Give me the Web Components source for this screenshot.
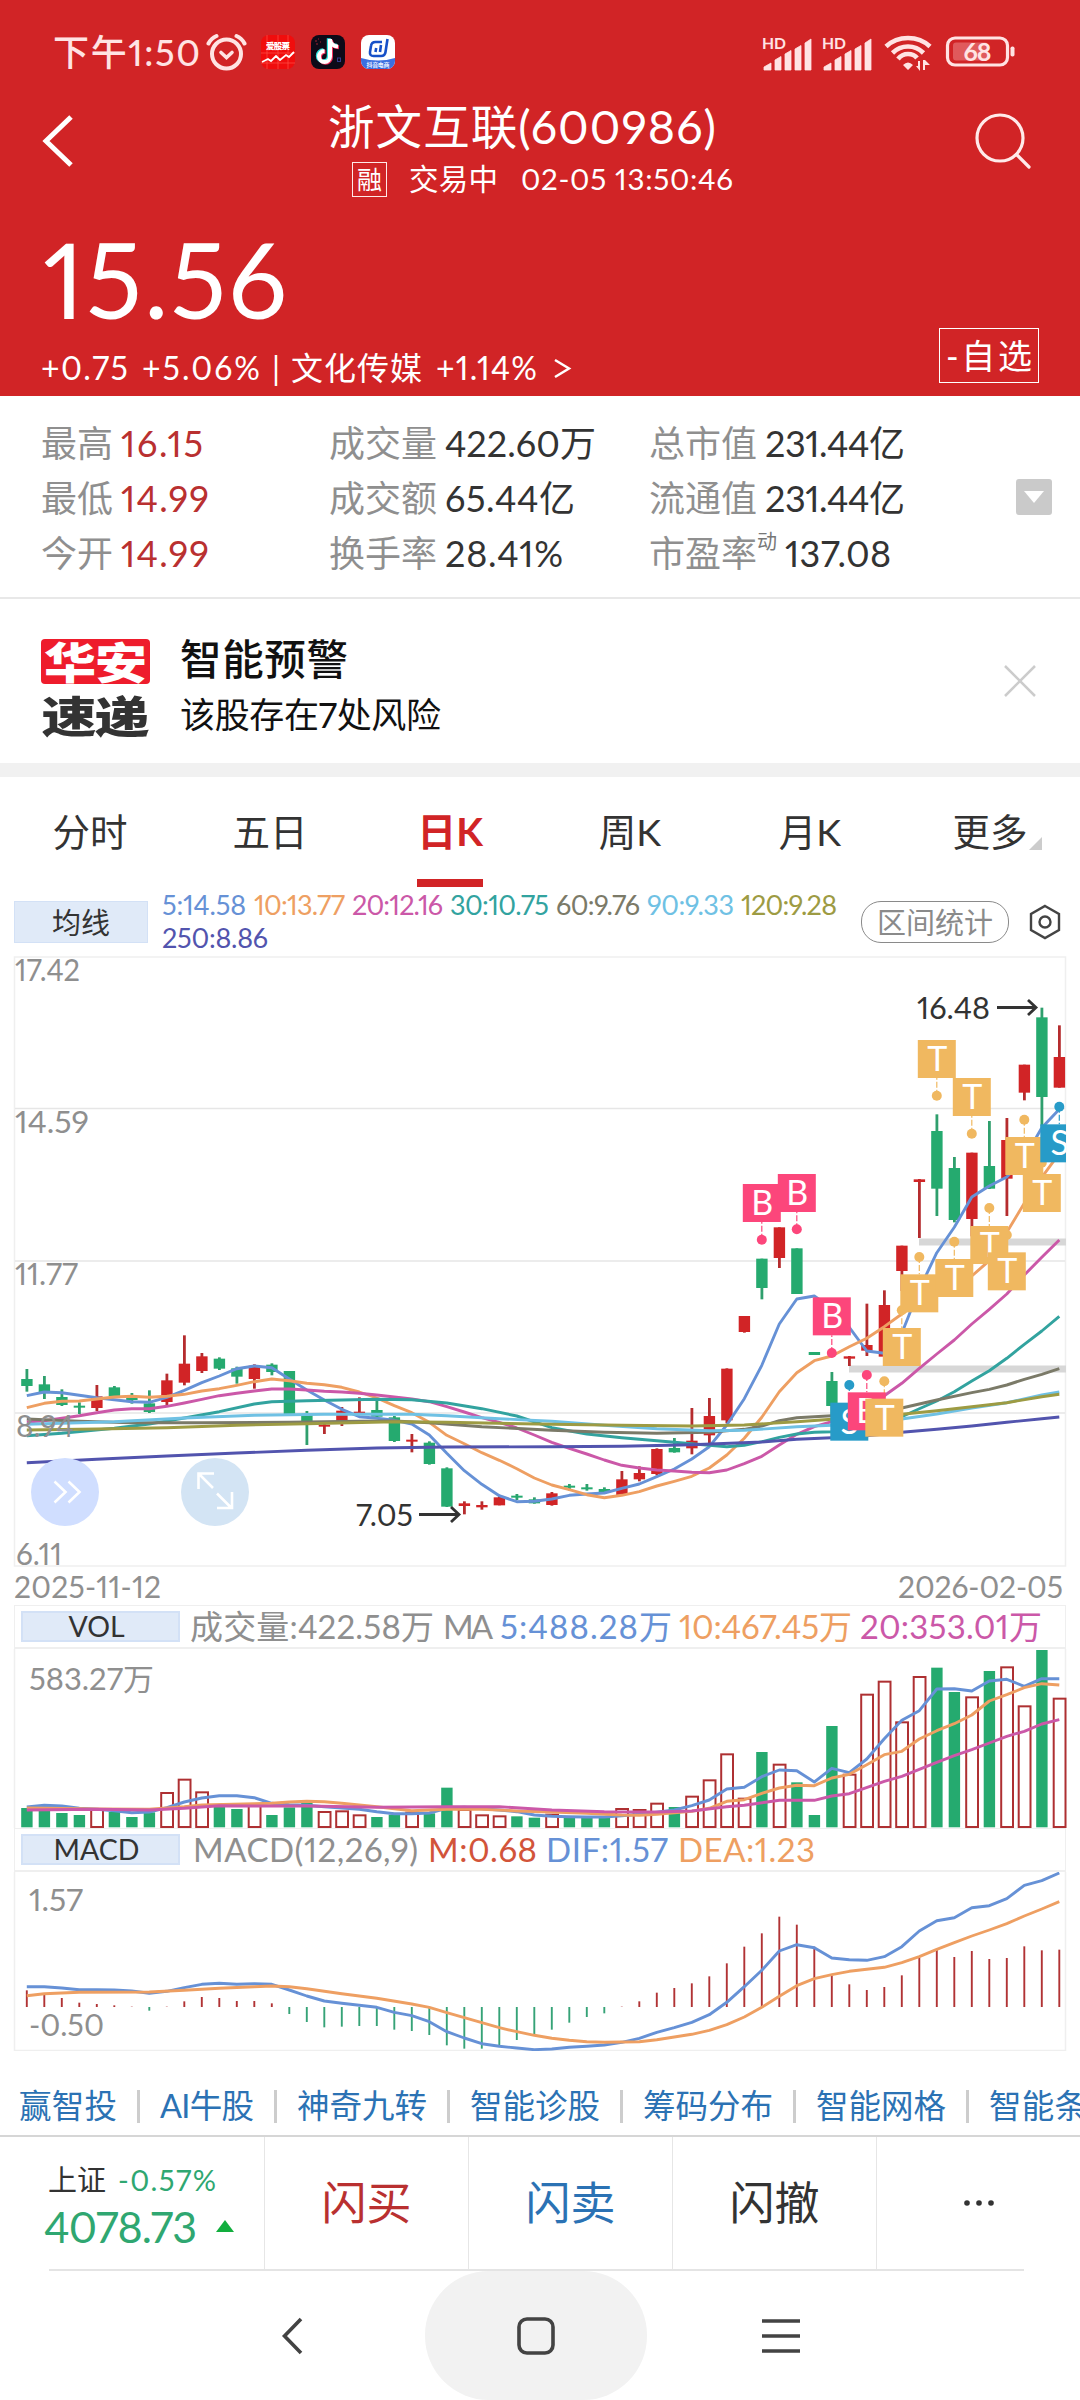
<!DOCTYPE html>
<html lang="zh-CN">
<head>
<meta charset="utf-8">
<title>浙文互联(600986)</title>
<style>
  body {
    margin: 0;
    width: 1080px;
    height: 2400px;
    overflow: hidden;
    background: #fff;
    color: #333;
    font-family: Lato, "Noto Sans CJK SC", sans-serif;
    font-variant-numeric: proportional-nums;
    line-height: 1;
  }
</style>
</head>
<body>
<stock-page></stock-page>

<script>
const RED = '#d12426';
const GREEN = '#25aa6f';
const BLUE = '#6691d6';
const ORANGE = '#ee9f62';
const PINK = '#cb58a8';

class BaseElement extends HTMLElement {
  constructor() {
    super();
    this.attachShadow({ mode: 'open' });
  }

  connectedCallback() {
    this.shadowRoot.innerHTML = `<style>
      * { box-sizing: border-box; }
      :host { display: block; box-sizing: border-box; }
      ${this.styles()}
    </style>${this.render()}`;
  }

  styles() {
    return '';
  }

  render() {
    return '<slot></slot>';
  }
}

// Text that spreads its letters over a given width
class FitText extends HTMLElement {
  constructor() {
    super();
    this.attachShadow({ mode: 'open' });
    this.shadowRoot.innerHTML = `
      <style>
        :host { display: inline-block; white-space: nowrap; flex: none; }
        span { display: inline-block; }
      </style>
      <span><slot></slot></span>`;
  }

  connectedCallback() {
    const width = Number(this.getAttribute('w'));
    const span = this.shadowRoot.querySelector('span');
    const count = this.textContent.length;
    const spacing = (width - span.getBoundingClientRect().width) / Math.max(count - 1, 1);
    this.style.width = width + 'px';
    span.style.letterSpacing = spacing.toFixed(3) + 'px';
  }
}

class StatusBar extends BaseElement {
  styles() {
    return `
      :host { height: 104px; padding: 0 62px 0 53px; display: flex; align-items: center; color: #ffe3e3; }
      .time { font-size: 36px; font-weight: 500; }
      svg { display: block; flex: none; }
      .alarm { margin-left: 6px; }
      .app { margin-left: 16px; }
      .app.first { margin-left: 14px; }
      .right { margin-left: auto; display: flex; align-items: center; }
    `;
  }

  signal() {
    return `
      <svg width="60" height="40" viewBox="0 0 60 40" fill="#ffe3e3">
        <text x="0" y="17" font-size="16" font-weight="700" textLength="24" lengthAdjust="spacingAndGlyphs" font-family="Lato">HD</text>
        <path d="M2 38v-3l7-4v7zM13 38V28l6-3.500v13.500zM23 38V22l6-3.500v19.500zM33 38V17l6-3.500v24.500zM43 38V11l6-4v31z" stroke="#ffe3e3" stroke-width=".8" stroke-linejoin="round"/>
      </svg>`;
  }

  render() {
    return `
      <fit-text class="time" w="147">下午1:50</fit-text>
      <svg class="alarm" width="41" height="40" viewBox="0 0 41 40" fill="none" stroke="#ffe3e3" stroke-width="4" stroke-linecap="round">
        <circle cx="20.500" cy="22" r="14.500"/>
        <path d="M15 20.500l5.500 5 5.500-5" stroke-width="3.600"/>
        <path d="M2.500 11.500Q5 6.500 10.500 4M38.500 11.500Q36 6.500 30.500 4"/>
      </svg>
      <svg class="app first" width="34" height="34" viewBox="0 0 34 34">
        <rect width="34" height="34" rx="8" fill="#f00d0d"/>
        <path d="M6 0v34M17 0v34M27 0v34M0 18h34M0 28h34" stroke="#ff5047" stroke-width=".7"/>
        <text x="5" y="14" font-size="8.500" font-weight="900" fill="#fff" textLength="24" font-family="Noto Sans CJK SC">爱股票</text>
        <path d="M1 27l6-3 3 2 5-5 4 4 6-5 3 2 5-5" fill="none" stroke="#fff" stroke-width="1.800"/>
      </svg>
      <svg class="app" width="34" height="34" viewBox="0 0 34 34">
        <rect width="34" height="34" rx="8" fill="#0d0a18"/>
        <g fill="none" stroke-width="4">
          <path d="M19 4v17.500a5.500 5.500 0 1 1-5.500-5.500M19 5q1 6 8 6.500" stroke="#2fe5e0" transform="translate(-1.200 -.8)"/>
          <path d="M19 4v17.500a5.500 5.500 0 1 1-5.500-5.500M19 5q1 6 8 6.500" stroke="#f4305c" transform="translate(1 .8)"/>
          <path d="M19 4v17.500a5.500 5.500 0 1 1-5.500-5.500M19 5q1 6 8 6.500" stroke="#fff"/>
        </g>
        <path d="M4 6h2M7 4h1M5 9h2M9 7h1" stroke="#a02234"/>
        <rect x="26.500" y="23" width="3" height="3.500" fill="none" stroke="#333c8c"/>
      </svg>
      <svg class="app" width="34" height="34" viewBox="0 0 34 34">
        <defs><clipPath id="r"><rect width="34" height="34" rx="8"/></clipPath></defs>
        <g clip-path="url(#r)">
          <rect width="34" height="34" fill="#fff"/>
          <path d="M0 23q17 5 34 0v11H0z" fill="#3b6fe0"/>
        </g>
        <path d="M21 7h-6.500q-4 0-4.500 4l-1 6q-.5 4 3.500 4h7.500q4 0 4.500-4L26.500 4M14.500 17l.7-4M19 17l1-7" fill="none" stroke="#1650c8" stroke-width="2.600"/>
        <text x="5.500" y="32" font-size="6" font-weight="700" fill="#e8f0ff" textLength="23" font-family="Noto Sans CJK SC">抖音电商</text>
      </svg>
      <div class="right">
        ${this.signal()}${this.signal()}
        <svg width="63" height="40" viewBox="0 0 63 40">
          <g fill="none" stroke="#ffe3e3" stroke-width="4.600">
            <path d="M4 14.500Q13 6 26 6t22 8.500"/>
            <path d="M10.500 21Q17 14.500 26 14.500T41.500 21"/>
            <path d="M16 27Q20 22 26 22t9 4"/>
          </g>
          <path d="M21 33q5-5 10 0l-5 5zM36 29v5h-2l4 5V29zM43 38v-5h5l-5-5h-2v10z" fill="#ffe3e3"/>
        </svg>
        <svg width="73" height="34" viewBox="0 0 73 34">
          <rect x="2.500" y="3" width="60" height="27" rx="7.500" fill="none" stroke="#ffe3e3" stroke-width="3.200"/>
          <rect x="8" y="7.500" width="35" height="18" rx="3" fill="#e05a5c"/>
          <rect x="65.500" y="11.500" width="4" height="10" rx="1.800" fill="#ffe3e3"/>
          <text x="18.500" y="25.500" font-size="25" font-weight="700" fill="#ffe3e3" textLength="28" font-family="Lato">68</text>
        </svg>
      </div>
    `;
  }
}

class StockHeader extends BaseElement {
  styles() {
    return `
      :host { height: 396px; background: ${RED}; color: #fff; }
      .bar { display: grid; grid-template-columns: 328px 1fr 110px; height: 106px; }
      svg { display: block; }
      .back { margin: 8px 0 0 40px; }
      .search { margin: 7px 0 0 0; }
      .title { font-size: 46.500px; height: 45px; display: flex; align-items: center; }
      .sub { height: 60px; display: flex; align-items: center; font-size: 29.500px; padding-left: 24px; }
      .tag { width: 35px; height: 35px; border: 1.500px solid #ffe9e9; font-size: 25px; display: grid; place-items: center; margin-right: 22px; }
      .quote { display: flex; justify-content: space-between; height: 186px; padding: 0 41px 13px 41px; }
      .price { font-size: 104px; height: 144px; display: flex; align-items: center; padding-bottom: 6px; margin-left: 2px; }
      .change { font-size: 32px; height: 28px; display: flex; align-items: center; white-space: nowrap; }
      .optional { align-self: flex-end; width: 100px; height: 55px; border: 1.500px solid #fff; font-size: 34px; display: flex; align-items: center; justify-content: center; }
    `;
  }

  render() {
    return `
      <status-bar></status-bar>
      <div class="bar">
        <svg class="back" width="36" height="58" viewBox="0 0 36 58"><path d="M31 5L6 29l25 24" fill="none" stroke="#fff" stroke-width="5"/></svg>
        <div>
          <div class="title"><fit-text w="388">浙文互联(600986)</fit-text></div>
          <div class="sub">
            <span class="tag">融</span>
            <fit-text w="89">交易中</fit-text>
            <fit-text w="212" style="margin-left:23px">02-05 13:50:46</fit-text>
          </div>
        </div>
        <svg class="search" width="62" height="62" viewBox="0 0 62 62" fill="none" stroke="#ffeaea" stroke-width="3.200" stroke-linecap="round"><circle cx="30" cy="27" r="23"/><path d="M46.500 43.500L59 56"/></svg>
      </div>
      <div class="quote">
        <div>
          <div class="price"><fit-text w="244">15.56</fit-text></div>
          <div class="change">
            <fit-text w="87">+0.75</fit-text>
            <fit-text w="118" style="margin-left:14px">+5.06%</fit-text>
            <span style="margin:0 11px 0 12px">|</span>
            <fit-text w="131">文化传媒</fit-text>
            <fit-text w="101" style="margin-left:14px">+1.14%</fit-text>
            <svg style="margin-left:16px" width="20" height="24" viewBox="0 0 20 24"><path d="M2 4l14 8.500L2 21" fill="none" stroke="#fff" stroke-width="2.500"/></svg>
          </div>
        </div>
        <div class="optional"><fit-text w="86">-自选</fit-text></div>
      </div>
    `;
  }
}

class StatItem extends BaseElement {
  styles() {
    return `
      :host { display: flex; align-items: center; height: 55px; font-size: 36px; }
      .label { color: #8f8f8f; }
      .value { color: var(--value, #333); margin-left: 8px; }
      sup { font-size: 20px; align-self: flex-start; margin-top: 6px; color: #777; line-height: 1; }
    `;
  }

  render() {
    const note = this.getAttribute('note');
    return `
      <span class="label">${this.getAttribute('label')}</span>${note ? `<sup>${note}</sup>` : ''}
      <fit-text class="value" w="${this.getAttribute('w')}">${this.textContent}</fit-text>
    `;
  }
}

class QuoteStats extends BaseElement {
  styles() {
    return `
      :host { display: flex; justify-content: space-between; height: 203px; padding: 19px 28px 0 41px; border-bottom: 2px solid #e8e8e8; }
      .grid { display: grid; grid-template-columns: 288px 320px 320px; grid-auto-rows: 55px; }
      .up { --value: #b93030; }
      .more { width: 36px; height: 36px; margin-top: 64px; border-radius: 3px; background: #cacaca; display: grid; place-items: center; }
    `;
  }

  render() {
    return `
      <div class="grid">
        <stat-item class="up" label="最高" w="82">16.15</stat-item>
        <stat-item label="成交量" w="151">422.60万</stat-item>
        <stat-item label="总市值" w="140">231.44亿</stat-item>
        <stat-item class="up" label="最低" w="88">14.99</stat-item>
        <stat-item label="成交额" w="130">65.44亿</stat-item>
        <stat-item label="流通值" w="140">231.44亿</stat-item>
        <stat-item class="up" label="今开" w="88">14.99</stat-item>
        <stat-item label="换手率" w="118">28.41%</stat-item>
        <stat-item label="市盈率" note="动" w="106">137.08</stat-item>
      </div>
      <div class="more"><svg width="20" height="12" viewBox="0 0 20 12"><path d="M0 0h20L10 12z" fill="#fff"/></svg></div>
    `;
  }
}

class RiskAlert extends BaseElement {
  styles() {
    return `
      :host { display: flex; height: 178px; padding: 40px 43px 0 41px; border-bottom: 14px solid #f1f1f1; color: #111; }
      .logo { width: 109px; margin-right: 30px; font-weight: 900; font-size: 52px; }
      .logo div { height: 45px; display: flex; align-items: center; justify-content: center; }
      .logo .top { background: #ee1c2c; color: #fff; border-radius: 4px; }
      .logo .bottom { color: #333; margin-top: 11px; font-size: 55px; }
      .logo fit-text { transform: scaleY(.84); }
      .logo .bottom fit-text { transform: scaleY(.78); }
      .title { height: 42px; font-size: 41.500px; font-weight: 500; display: flex; align-items: center; }
      .text { height: 66px; font-size: 35px; display: flex; align-items: center; }
      .close { margin: 25px 0 0 auto; }
    `;
  }

  render() {
    return `
      <div class="logo">
        <div class="top"><fit-text w="103">华安</fit-text></div>
        <div class="bottom"><fit-text w="108">速递</fit-text></div>
      </div>
      <div>
        <div class="title"><fit-text w="168">智能预警</fit-text></div>
        <div class="text"><fit-text w="261">该股存在7处风险</fit-text></div>
      </div>
      <svg class="close" width="34" height="34" viewBox="0 0 34 34"><path d="M2 2l30 30M32 2L2 32" stroke="#ccc" stroke-width="2.500"/></svg>
    `;
  }
}

class PeriodTabs extends BaseElement {
  styles() {
    return `
      :host { display: grid; grid-template-columns: repeat(6, 180px); height: 110px; font-size: 37.500px; }
      div { position: relative; display: flex; align-items: center; justify-content: center; padding-bottom: 1px; }
      .active { color: ${RED}; font-weight: 700; font-size: 39px; }
      .active::after { content: ""; position: absolute; left: 57px; bottom: 0; width: 66px; height: 8px; background: ${RED}; }
      svg { position: absolute; right: 38px; bottom: 37px; }
    `;
  }

  render() {
    return `
      <div>分时</div><div>五日</div><div class="active">日K</div><div>周K</div><div>月K</div>
      <div>更多<svg width="13" height="13"><path d="M13 0v13H0z" fill="#ccc"/></svg></div>
    `;
  }
}

class MaLegend extends BaseElement {
  styles() {
    return `
      :host { display: flex; height: 69px; padding-left: 14px; }
      :host > * { flex: none; }
      .name { width: 134px; height: 42px; margin-top: 14px; background: #e0eaf8; border: 1px solid #d3e1f6; font-size: 29px; display: grid; place-items: center; }
      .list { width: 690px; margin: 1px 0 0 14px; font-size: 27px; line-height: 33px; display: flex; flex-wrap: wrap; height: 66px; }
      .range { width: 148px; height: 42px; margin: 14px 0 0 9px; border: 1.500px solid #8a8a8a; border-radius: 20px; color: #8a8a8a; font-size: 29px; display: grid; place-items: center; }
      .gear { margin: 17px 0 0 20px; }
    `;
  }

  render() {
    const items = [
      ['5:14.58', BLUE, 84, 8],
      ['10:13.77', ORANGE, 91, 7],
      ['20:12.16', PINK, 91, 7],
      ['30:10.75', '#32a39f', 99, 7],
      ['60:9.76', '#7b7a68', 84, 7],
      ['90:9.33', '#6fc1e4', 87, 7],
      ['120:9.28', '#9d9b43', 96, 4],
      ['250:8.86', '#5254ae', 106, 0]
    ];
    return `
      <div class="name">均线</div>
      <div class="list">${items.map(([text, color, w, gap]) =>
        `<fit-text w="${w}" style="color:${color};margin-right:${gap}px">${text}</fit-text>`).join('')}</div>
      <div class="range">区间统计</div>
      <svg class="gear" width="32" height="36" viewBox="0 0 32 36" fill="none" stroke="#444" stroke-width="2.400"><path d="M16 2l14 8v16l-14 8-14-8V10z"/><circle cx="16" cy="18" r="5.500"/></svg>
    `;
  }
}

// Shared drawing for the charts. Heights in the data are in thirds of a pixel.
class ChartElement extends BaseElement {
  x(i) {
    return 26.8 + i * 17.5;
  }

  line(points, color, offset = 0, width = 2.9) {
    const path = points.map(([i, v]) => `${this.x(i).toFixed(1)},${((v + offset) / 3).toFixed(1)}`).join(' ');
    return `<polyline points="${path}" fill="none" stroke="${color}" stroke-width="${width}" stroke-linejoin="round"/>`;
  }

  label(text, x, y, width, color = '#8f8f8f') {
    return `<text x="${x}" y="${y}" font-size="30" fill="${color}" textLength="${width}" lengthAdjust="spacingAndGlyphs">${text}</text>`;
  }
}

// color, high, top, bottom, low
const CANDLES = [
  ['g', 1239, 1269, 1290, 1307], ['g', 1260, 1285, 1310, 1329], ['g', 1300, 1323, 1347, 1350],
  ['g', 1339, 1349, 1354, 1374], ['r', 1287, 1321, 1356, 1365], ['g', 1290, 1294, 1320, 1322],
  ['g', 1311, 1324, 1332, 1343], ['g', 1303, 1342, 1368, 1371], ['r', 1253, 1273, 1338, 1349],
  ['r', 1138, 1223, 1280, 1288], ['r', 1191, 1201, 1245, 1251], ['g', 1204, 1208, 1238, 1242],
  ['g', 1232, 1237, 1262, 1283], ['r', 1225, 1229, 1269, 1298], ['g', 1222, 1226, 1248, 1258],
  ['g', 1245, 1245, 1374, 1374], ['g', 1365, 1377, 1398, 1467], ['r', 1402, 1406, 1412, 1434],
  ['r', 1353, 1364, 1396, 1410], ['r', 1324, 1367, 1371, 1371], ['g', 1335, 1362, 1382, 1384],
  ['g', 1380, 1384, 1455, 1458], ['r', 1434, 1451, 1456, 1489], ['g', 1456, 1460, 1524, 1526],
  ['g', 1534, 1537, 1652, 1653], ['r', 1636, 1642, 1650, 1675], ['r', 1636, 1647, 1654, 1661],
  ['r', 1617, 1624, 1648, 1648], ['g', 1614, 1619, 1623, 1632], ['g', 1624, 1630, 1642, 1643],
  ['r', 1608, 1612, 1647, 1649], ['g', 1584, 1589, 1594, 1604], ['g', 1584, 1594, 1599, 1604],
  ['g', 1594, 1599, 1609, 1612], ['r', 1545, 1570, 1617, 1617], ['r', 1531, 1551, 1570, 1576],
  ['r', 1477, 1479, 1554, 1558], ['g', 1446, 1476, 1489, 1490], ['r', 1356, 1454, 1477, 1495],
  ['r', 1326, 1380, 1438, 1464], ['r', 1237, 1238, 1393, 1402], ['r', 1080, 1080, 1128, 1130],
  ['g', 908, 908, 996, 1030], ['r', 814, 814, 906, 936], ['g', 877, 877, 1014, 1014],
  ['g', 1188, 1188, 1197, 1197], ['g', 1248, 1275, 1350, 1382], ['r', 1200, 1201, 1208, 1230],
  ['r', 1043, 1167, 1184, 1200], ['r', 1003, 1047, 1202, 1218], ['r', 869, 869, 945, 1005],
  ['r', 669, 670, 678, 846], ['g', 475, 525, 698, 780], ['g', 603, 636, 792, 799],
  ['r', 590, 590, 789, 841], ['g', 495, 630, 698, 699], ['r', 486, 552, 668, 780],
  ['r', 326, 326, 410, 433], ['g', 155, 184, 423, 512], ['r', 208, 303, 395, 395]
];

const seq = values => values.map((v, i) => [i, v]);

const PRICE_LINES = [
  [BLUE, seq([1319, 1308, 1310, 1318, 1325, 1331, 1337, 1339, 1324, 1303, 1280, 1260, 1238, 1230, 1235, 1269, 1302, 1332, 1360, 1382,
    1387, 1393, 1404, 1437, 1492, 1544, 1585, 1619, 1637, 1636, 1629, 1618, 1614, 1611, 1597, 1584, 1562, 1539, 1509, 1472,
    1407, 1328, 1228, 1104, 1029, 1020, 1057, 1114, 1185, 1192, 1132, 1000, 890, 814, 723, 690, 663, 607, 515, 460])],
  [ORANGE, seq([1355, 1342, 1336, 1335, 1329, 1323, 1321, 1324, 1321, 1315, 1305, 1298, 1288, 1277, 1269, 1274, 1282, 1286, 1294, 1308,
    1326, 1349, 1370, 1399, 1438, 1463, 1490, 1513, 1538, 1566, 1587, 1601, 1616, 1625, 1618, 1607, 1590, 1576, 1561, 1536,
    1497, 1447, 1384, 1307, 1250, 1214, 1200, 1172, 1147, 1112, 1074, 1037, 1002, 982, 960, 914, 829, 742, 664, 592])],
  [PINK, seq([1398, 1394, 1387, 1379, 1370, 1362, 1358, 1358, 1351, 1341, 1330, 1319, 1312, 1305, 1299, 1299, 1302, 1306, 1308, 1312,
    1317, 1323, 1329, 1337, 1352, 1368, 1385, 1399, 1416, 1437, 1459, 1477, 1494, 1512, 1528, 1536, 1542, 1545, 1549, 1550,
    1542, 1523, 1501, 1467, 1435, 1412, 1397, 1382, 1357, 1319, 1282, 1237, 1194, 1152, 1104, 1060, 1014, 957, 904, 852])],
  ['#32a39f', [[0, 1439], [2, 1432], [5, 1417], [7, 1404], [9, 1386], [11, 1367], [13, 1344], [14, 1337], [16, 1334], [20, 1330], [22, 1331],
    [24, 1341], [26, 1358], [28, 1380], [30, 1415], [32, 1434], [34, 1445], [35, 1450], [37, 1459], [39, 1468], [40, 1472], [41, 1468],
    [42, 1457], [43, 1444], [44, 1434], [45, 1429], [46, 1427], [48, 1417], [49, 1407], [50, 1382], [51, 1358], [52, 1335], [53, 1307],
    [54, 1275], [55, 1244], [56, 1207], [57, 1165], [58, 1125], [59, 1081]]],
  ['#7b7a68', [[0, 1389], [3, 1396], [6, 1400], [10, 1400], [15, 1399], [19, 1396], [21, 1395], [23, 1400], [26, 1412], [30, 1423], [33, 1429],
    [36, 1432], [39, 1429], [41, 1420], [42, 1410], [43, 1394], [44, 1385], [46, 1379], [48, 1372], [50, 1356], [52, 1332], [54, 1310],
    [55, 1300], [56, 1287], [57, 1270], [58, 1255], [59, 1238]]],
  ['#6fc1e4', [[0, 1405], [5, 1397], [9, 1386], [13, 1378], [17, 1375], [22, 1375], [24, 1379], [27, 1388], [30, 1396], [33, 1408], [36, 1418],
    [39, 1424], [41, 1423], [44, 1412], [46, 1408], [48, 1404], [50, 1389], [52, 1374], [54, 1356], [56, 1340], [58, 1317], [59, 1308]]],
  ['#9d9b43', [[0, 1422], [4, 1419], [8, 1415], [12, 1408], [16, 1403], [21, 1397], [24, 1399], [30, 1405], [34, 1408], [38, 1410], [41, 1407],
    [44, 1397], [46, 1390], [48, 1384], [50, 1375], [52, 1364], [54, 1352], [56, 1340], [58, 1322], [59, 1315]]],
  ['#5254ae', [[0, 1520], [4, 1510], [8, 1500], [12, 1491], [16, 1483], [20, 1476], [24, 1473], [30, 1472], [34, 1471], [38, 1466], [42, 1458],
    [44, 1450], [46, 1445], [48, 1439], [50, 1429], [52, 1420], [54, 1410], [56, 1399], [58, 1388], [59, 1383]]]
];

// letter, index, top of the box, height of the dot
const MARKS = [
  ['B', 42, 684, 851], ['B', 44, 654, 820], ['B', 46, 1024, 1191],
  ['S', 47, 1340, 1287], ['B', 48, 1309, 1257], ['T', 49, 1328, 1276],
  ['T', 50, 1116, 1063], ['T', 51, 955, 903], ['T', 52, 252, 419],
  ['T', 53, 909, 857], ['T', 54, 366, 533], ['T', 55, 810, 756],
  ['T', 56, 889, 837], ['T', 57, 543, 491], ['T', 58, 654, 620],
  ['S', 59, 505, 452]
];

const MARK_COLORS = { B: '#fc467b', S: '#279bc8', T: '#f0b860' };

class KlineChart extends ChartElement {
  styles() {
    return `
      svg { display: block; overflow: visible; }
      .dates { display: flex; justify-content: space-between; align-items: center; height: 38px; padding: 0 17px 0 14px; font-size: 30px; color: #8f8f8f; }
    `;
  }

  candle([type, high, top, bottom, low], i) {
    const x = this.x(i);
    const fill = type === 'r' ? RED : GREEN;
    const wick = type === 'r' ? '#b52c2e' : '#2f9f6d';
    const height = Math.max((bottom - top) / 3, 2);
    return `<rect x="${x - 1.3}" y="${high / 3}" width="2.800" height="${(low - high) / 3}" fill="${wick}"/>
      <rect x="${x - 5.6}" y="${top / 3}" width="11.400" height="${height}" fill="${fill}"/>`;
  }

  dot([letter, i, top, dot]) {
    const x = this.x(i);
    const edge = dot > top ? top + 114 : top;
    return `<path d="M${x} ${dot / 3}V${edge / 3}" stroke="${MARK_COLORS[letter]}" stroke-width="1.200" stroke-dasharray="6 2"/>
      <circle cx="${x}" cy="${dot / 3}" r="5" fill="${MARK_COLORS[letter]}"/>`;
  }

  box([letter, i, top]) {
    const x = this.x(i);
    return `<rect x="${x - 19}" y="${top / 3}" width="38" height="38" fill="${MARK_COLORS[letter]}"/>
      <text x="${x + 0.5}" y="${top / 3 + 31}" font-size="34" fill="#fff" text-anchor="middle">${letter}</text>`;
  }

  render() {
    return `
      <svg width="1080" height="611" viewBox="0 0 1080 611">
        <defs><clipPath id="frame"><rect x="14" y="0" width="1052" height="611"/></clipPath></defs>
        <g stroke="#efefef" stroke-width="1.500" fill="none">
          <rect x="14.500" y="1" width="1051" height="609"/>
          <path d="M15 152.500H1065M15 305H1065M15 457H1065" stroke="#e6e6e6"/>
        </g>
        <path d="M919 286h147M849 413h217" stroke="#d7d7d7" stroke-width="7"/>
        <g clip-path="url(#frame)">
          ${CANDLES.map((c, i) => this.candle(c, i)).join('')}
          ${PRICE_LINES.map(([color, points]) => this.line(points, color)).join('')}
          ${MARKS.map(m => this.dot(m)).join('')}
          ${MARKS.map(m => this.box(m)).join('')}
        </g>
        ${this.label('17.42', 15, 25, 65)}
        ${this.label('14.59', 15, 177, 74)}
        ${this.label('11.77', 15, 329, 63)}
        ${this.label('8.94', 16, 481, 58)}
        ${this.label('6.11', 16, 609, 46)}
        ${this.label('16.48', 917, 63, 73, '#333')}
        ${this.label('7.05', 356, 570, 57, '#333')}
        <path d="M997 51.500h38M1028 44l8 7.500-8 7.500M419 558.500h39M451 551l8 7.500-8 7.500" fill="none" stroke="#333" stroke-width="2.800"/>
        <circle cx="65" cy="536" r="34" fill="#d0deff"/>
        <path d="M54.500 525.500l11 10.500-11 10.500M68.500 525.500l11 10.500-11 10.500" fill="none" stroke="#fff" stroke-width="2.600"/>
        <circle cx="215" cy="536" r="34" fill="#d3e4f4"/>
        <path d="M213 532l-14-14M198.500 533v-15.500H214M217 537.500l14.500 14.500M217 552h15v-16" fill="none" stroke="#fff" stroke-width="2.600"/>
      </svg>
      <div class="dates"><fit-text w="147">2025-11-12</fit-text><fit-text w="165">2026-02-05</fit-text></div>
    `;
  }
}

// Title row with the indicator name and its values, the plot goes below
class IndicatorHead extends BaseElement {
  styles() {
    return `
      :host { display: flex; align-items: center; height: 44px; margin: 0 14px; padding-left: 6px; border: 1.500px solid #efefef; border-bottom-width: 2px; font-size: 33px; white-space: nowrap; }
      .name { flex: none; width: 159px; height: 31px; background: #e0eaf8; border: 2px solid #d3e1f6; display: flex; align-items: center; justify-content: center; font-size: 28.500px; padding-right: 8px; margin-right: 10px; }
    `;
  }

  render() {
    return `<div class="name">${this.getAttribute('name')}</div><slot></slot>`;
  }
}

const VOLUMES = 'g624 g630 g639 g645 r630 g636 g651 g637 r579 r539 r577 g620 g627 r618 g645 g622 g608 r636 r634 r646 g651 g644 r638 g640 g563 r630 r646 r649 g649 g653 r644 g652 g652 g652 r627 r630 r611 g621 r590 r541 r463 r596 g456 r494 g547 g645 g378 r524 r284 r245 r367 r231 g203 g276 r292 g213 r202 r319 g150 r296'.split(' ');

class VolumeChart extends ChartElement {
  styles() {
    return 'svg { display: block; }';
  }

  bar(item, i) {
    const x = this.x(i);
    const y = (Number(item.slice(1)) - 147) / 3;
    if (item[0] === 'g') {
      return `<rect x="${x - 5.6}" y="${y}" width="11.400" height="${178.3 - y}" fill="${GREEN}"/>`;
    }
    return `<rect x="${x - 5.6}" y="${y}" width="11.800" height="${178 - y}" fill="#fff" stroke="#ae3032" stroke-width="2"/>`;
  }

  render() {
    const ma5 = seq([621, 616, 618, 625, 628, 632, 638, 636, 623, 606, 594, 587, 587, 593, 610, 614, 616, 620, 624, 628,
      635, 641, 641, 639, 625, 622, 626, 630, 635, 645, 649, 650, 651, 651, 647, 643, 637, 630, 617, 600,
      567, 562, 530, 510, 512, 546, 505, 518, 477, 416, 361, 332, 267, 266, 273, 243, 238, 259, 236, 236]);
    const ma10 = [[0, 624], [4, 627], [7, 628], [8, 624], [9, 620], [10, 615], [13, 611], [14, 610], [15, 606], [16, 604], [17, 605], [18, 610],
      [20, 620], [22, 632], [24, 628], [26, 628], [28, 633], [30, 636], [32, 640], [34, 645], [35, 646], [36, 643], [38, 634], [39, 625],
      [40, 604], [41, 599], [42, 580], [43, 564], [44, 556], [45, 557], [46, 534], [47, 523], [48, 494], [49, 464], [50, 454], [51, 417],
      [52, 392], [53, 371], [54, 345], [55, 303], [56, 284], [57, 263], [58, 251], [59, 255]];
    const ma20 = [[0, 630], [4, 628], [7, 630], [9, 625], [11, 617], [13, 618], [16, 618], [20, 622], [24, 620], [27, 620], [30, 630], [33, 635],
      [36, 636], [38, 633], [40, 620], [41, 616], [43, 601], [45, 601], [46, 588], [47, 581], [49, 544], [50, 529], [51, 508], [52, 487],
      [53, 467], [54, 449], [55, 429], [56, 409], [57, 394], [58, 372], [59, 359]];
    return `
      <svg width="1080" height="179" viewBox="0 0 1080 179">
        <path d="M14.500 0v179M1065.500 0v179" stroke="#efefef" stroke-width="1.500"/>
        ${VOLUMES.map((v, i) => this.bar(v, i)).join('')}
        ${this.line(ma5, BLUE, -147)}
        ${this.line(ma10, ORANGE, -147)}
        ${this.line(ma20, PINK, -147)}
        ${this.label('583.27万', 29, 41, 125)}
      </svg>
    `;
  }
}

class MacdChart extends ChartElement {
  styles() {
    return 'svg { display: block; }';
  }

  render() {
    const bars = [1171, 1184, 1194, 1208, 1212, 1216, 1220, 1232, 1220, 1204, 1191, 1194, 1203, 1203, 1210, 1242, 1266, 1282, 1280, 1278,
      1278, 1289, 1293, 1305, 1336, 1346, 1346, 1335, 1320, 1303, 1289, 1268, 1251, 1240, 1220, 1204, 1178, 1164, 1150, 1129,
      1090, 1040, 1000, 950, 974, 1040, 1127, 1153, 1170, 1161, 1126, 1072, 1048, 1071, 1053, 1077, 1074, 1039, 1051, 1049];
    const dif = seq([1160, 1160, 1164, 1169, 1169, 1170, 1173, 1180, 1174, 1163, 1153, 1150, 1153, 1151, 1153, 1170, 1188, 1203, 1210, 1216,
      1222, 1237, 1247, 1265, 1295, 1314, 1331, 1339, 1344, 1349, 1347, 1342, 1339, 1335, 1327, 1315, 1297, 1283, 1267, 1244,
      1207, 1160, 1111, 1053, 1034, 1043, 1074, 1079, 1081, 1070, 1040, 993, 962, 953, 923, 917, 896, 856, 842, 819]);
    const dea = [[0, 1187], [1, 1181], [3, 1177], [7, 1176], [9, 1171], [11, 1165], [13, 1160], [14, 1158], [15, 1160], [16, 1166], [18, 1181],
      [20, 1195], [22, 1212], [23, 1222], [24, 1238], [25, 1253], [26, 1268], [27, 1283], [28, 1295], [29, 1306], [30, 1315], [31, 1321],
      [32, 1325], [33, 1327], [35, 1325], [36, 1319], [38, 1303], [39, 1291], [40, 1274], [41, 1251], [42, 1222], [43, 1189], [44, 1157],
      [45, 1136], [46, 1124], [47, 1114], [49, 1102], [50, 1088], [51, 1070], [52, 1048], [53, 1028], [54, 1008], [55, 990], [56, 971],
      [57, 948], [58, 927], [59, 905]];
    const zero = (1221 - 816) / 3;
    return `
      <svg width="1080" height="179" viewBox="0 0 1080 179">
        <path d="M14.500 0v178.500H1065.500V0" fill="none" stroke="#efefef" stroke-width="1.500"/>
        ${bars.map((v, i) => `<path d="M${this.x(i)} ${zero}V${(v - 816) / 3}" stroke="${v > 1221 ? '#36a377' : '#b13335'}" stroke-width="1.900"/>`).join('')}
        ${this.line(dif, BLUE, -816)}
        ${this.line(dea, ORANGE, -816)}
        ${this.label('1.57', 29, 39, 54)}
        ${this.label('-0.50', 29, 164, 75)}
      </svg>
    `;
  }
}

class QuickLinks extends BaseElement {
  styles() {
    return `
      :host { display: flex; align-items: center; height: 86px; padding: 26px 0 0 19px; overflow: hidden; border-bottom: 2px solid #d6d6d6; font-size: 32.500px; color: #2b72b4; }
      i { flex: none; width: 3px; height: 33px; background: #cdcdcd; margin: 0 20px; }
    `;
  }

  render() {
    const links = [['赢智投', 98], ['AI牛股', 94], ['神奇九转', 130], ['智能诊股', 130], ['筹码分布', 130], ['智能网格', 130], ['智能条', 98]];
    return links.map(([text, w]) => `<fit-text w="${w}">${text}</fit-text>`).join('<i></i>');
  }
}

class TradeBar extends BaseElement {
  styles() {
    return `
      :host { display: grid; grid-template-columns: 265px repeat(4, 204px); height: 134px; position: relative; }
      :host::after { content: ""; position: absolute; left: 49px; right: 56px; bottom: 0; height: 2px; background: #e4e4e4; }
      .cell { border-right: 1.500px solid #e6e6e6; display: flex; align-items: center; justify-content: center; font-size: 45px; padding-bottom: 2px; }
      .cell:last-child { border: 0; }
      .index { flex-direction: column; align-items: flex-start; justify-content: flex-start; padding: 27px 0 0 44px; color: #2fa771; }
      .row { display: flex; align-items: center; }
      .name { color: #333; font-size: 29px; height: 30px; padding-left: 4px; }
      .buy { color: #b93030; }
      .sell { color: #2b72b4; }
    `;
  }

  render() {
    return `
      <div class="cell index">
        <div class="row name"><span>上证</span><fit-text w="98" style="color:#2fa771;margin-left:12px">-0.57%</fit-text></div>
        <div class="row" style="height:64px;font-size:43px"><fit-text w="153">4078.73</fit-text>
          <svg style="margin-left:19px" width="18" height="12"><path d="M0 12L9 0l9 12z" fill="#12ae3e"/></svg></div>
      </div>
      <div class="cell buy">闪买</div>
      <div class="cell sell">闪卖</div>
      <div class="cell">闪撤</div>
      <div class="cell"><svg width="30" height="6" fill="#333"><circle cx="3" cy="3" r="2.800"/><circle cx="15" cy="3" r="2.800"/><circle cx="27" cy="3" r="2.800"/></svg></div>
    `;
  }
}

class NavBar extends BaseElement {
  styles() {
    return `
      :host { display: flex; align-items: center; height: 129px; padding-left: 281px; }
      .home { width: 222px; height: 129px; border-radius: 64px; background: #f2f2f2; margin: 0 115px 0 122px; display: grid; place-items: center; }
      svg { display: block; fill: none; stroke: #434343; stroke-width: 3.600px; }
    `;
  }

  render() {
    return `
      <svg width="22" height="38" viewBox="0 0 22 38"><path d="M20 2L3.500 19 20 36"/></svg>
      <div class="home"><svg width="38" height="38" viewBox="0 0 38 38"><rect x="2" y="2" width="34" height="34" rx="8"/></svg></div>
      <svg width="38" height="36" viewBox="0 0 38 36"><path d="M0 3h38M0 18h38M0 33h38"/></svg>
    `;
  }
}

class StockPage extends BaseElement {
  styles() {
    return ':host { width: 1080px; }';
  }

  render() {
    return `
      <stock-header></stock-header>
      <quote-stats></quote-stats>
      <risk-alert></risk-alert>
      <period-tabs></period-tabs>
      <ma-legend></ma-legend>
      <kline-chart></kline-chart>
      <indicator-head name="VOL">
        <fit-text w="244" style="color:#8f8f8f">成交量:422.58万</fit-text>
        <fit-text w="50" style="color:#8f8f8f;margin-left:9px">MA</fit-text>
        <fit-text w="172" style="color:${BLUE};margin-left:7px">5:488.28万</fit-text>
        <fit-text w="173" style="color:${ORANGE};margin-left:7px">10:467.45万</fit-text>
        <fit-text w="182" style="color:${PINK};margin-left:8px">20:353.01万</fit-text>
      </indicator-head>
      <volume-chart></volume-chart>
      <indicator-head name="MACD">
        <fit-text w="225" style="color:#8f8f8f;margin-left:3px">MACD(12,26,9)</fit-text>
        <fit-text w="109" style="color:#d2543a;margin-left:10px">M:0.68</fit-text>
        <fit-text w="122" style="color:${BLUE};margin-left:9px">DIF:1.57</fit-text>
        <fit-text w="137" style="color:${ORANGE};margin-left:10px">DEA:1.23</fit-text>
      </indicator-head>
      <macd-chart></macd-chart>
      <quick-links></quick-links>
      <trade-bar></trade-bar>
      <nav-bar></nav-bar>
    `;
  }
}

customElements.define('fit-text', FitText);
customElements.define('status-bar', StatusBar);
customElements.define('stock-header', StockHeader);
customElements.define('stat-item', StatItem);
customElements.define('quote-stats', QuoteStats);
customElements.define('risk-alert', RiskAlert);
customElements.define('period-tabs', PeriodTabs);
customElements.define('ma-legend', MaLegend);
customElements.define('kline-chart', KlineChart);
customElements.define('indicator-head', IndicatorHead);
customElements.define('volume-chart', VolumeChart);
customElements.define('macd-chart', MacdChart);
customElements.define('quick-links', QuickLinks);
customElements.define('trade-bar', TradeBar);
customElements.define('nav-bar', NavBar);
customElements.define('stock-page', StockPage);
</script>
</body>
</html>
